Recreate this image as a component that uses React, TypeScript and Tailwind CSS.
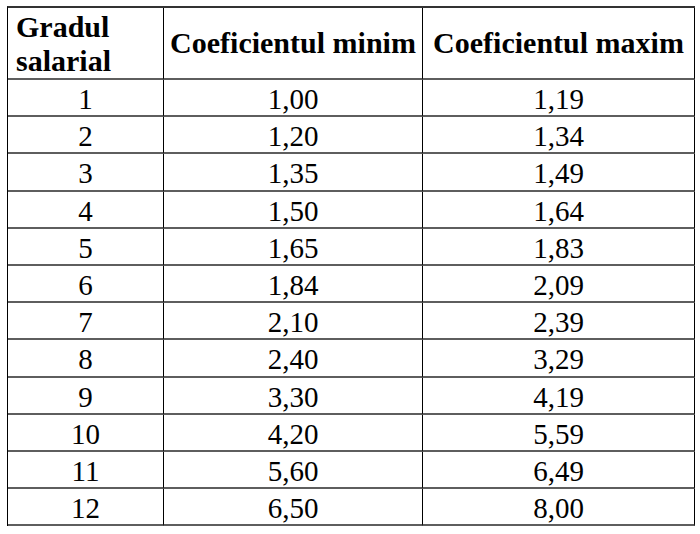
import React from "react";

const rows: [string, string, string][] = [
  ["1", "1,00", "1,19"],
  ["2", "1,20", "1,34"],
  ["3", "1,35", "1,49"],
  ["4", "1,50", "1,64"],
  ["5", "1,65", "1,83"],
  ["6", "1,84", "2,09"],
  ["7", "2,10", "2,39"],
  ["8", "2,40", "3,29"],
  ["9", "3,30", "4,19"],
  ["10", "4,20", "5,59"],
  ["11", "5,60", "6,49"],
  ["12", "6,50", "8,00"],
];

const cellBase =
  "border-r border-b-2 border-r-black border-b-[#5e5e5e] flex items-center";

export default function App() {
  return (
    <div className="w-[700px] h-[534px] bg-white overflow-hidden pt-[6px] pl-[7px] text-black [font-family:'Liberation_Serif','Times_New_Roman',serif]">
      <div className="w-[688px] border-l border-t-2 border-l-black border-t-[#333] grid grid-cols-[156px_259px_272px] grid-rows-[72px_repeat(12,37.2px)]">
        <div className={`${cellBase} pl-[8px] pt-[1px] font-bold text-[30px] leading-[34px]`}>
          <span>
            Gradul
            <br />
            salarial
          </span>
        </div>
        <div className={`${cellBase} justify-center font-bold text-[30px] leading-[34px] whitespace-nowrap`}>
          Coeficientul minim
        </div>
        <div className={`${cellBase} justify-center font-bold text-[30px] leading-[34px] whitespace-nowrap`}>
          Coeficientul maxim
        </div>
        {rows.map((r) =>
          r.map((v, i) => (
            <div
              key={r[0] + "-" + i}
              className={`${cellBase} justify-center pt-[4px] text-[29px] leading-[33px]`}
            >
              {v}
            </div>
          ))
        )}
      </div>
    </div>
  );
}
